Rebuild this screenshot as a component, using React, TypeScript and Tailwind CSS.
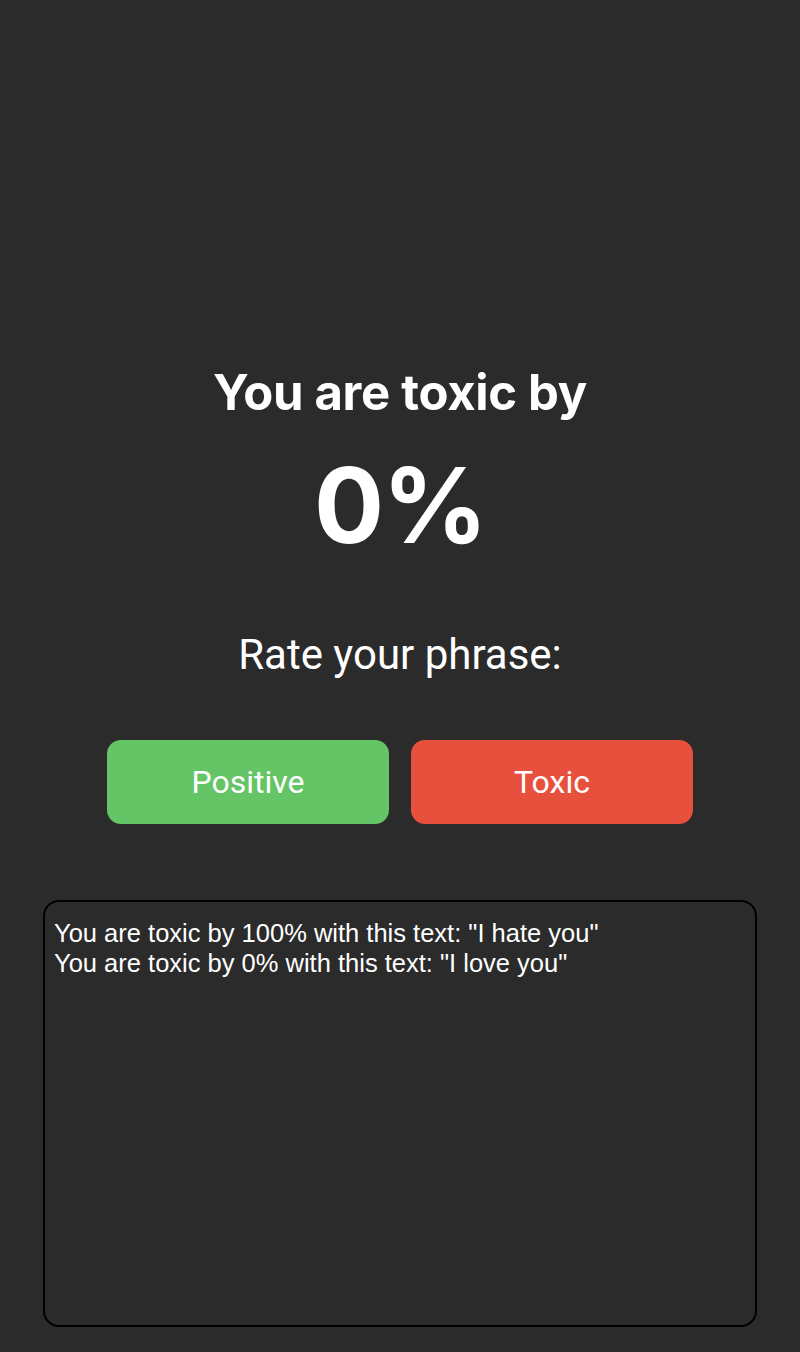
const history = `You are toxic by 100% with this text: "I hate you"
You are toxic by 0% with this text: "I love you"`;

const App = () => {
  return (
    <div className="min-h-[1352px] w-full bg-[#2b2b2b] flex flex-col items-center text-white">
      {/* Score */}
      <h1 className="mt-[364px] text-[49px] leading-[58px] font-bold tracking-[-0.3px] font-['Inter',sans-serif]">
        You are toxic by
      </h1>
      <div className="mt-[28px] text-[104px] leading-[110px] font-bold tracking-[-2px] font-['Inter',sans-serif]">
        0%
      </div>

      {/* Rating */}
      <p className="mt-[70px] text-[42px] leading-[50px] font-['Roboto',sans-serif]">
        Rate your phrase:
      </p>
      <div className="mt-[60px] flex gap-[22px]">
        <button className="w-[282px] h-[84px] rounded-[14px] bg-[#64c466] text-[32px] font-['Roboto',sans-serif] text-white">
          Positive
        </button>
        <button className="w-[282px] h-[84px] rounded-[14px] bg-[#e8503e] text-[32px] font-['Roboto',sans-serif] text-white">
          Toxic
        </button>
      </div>

      {/* History */}
      <textarea
        readOnly
        defaultValue={history}
        className="mt-[76px] w-[714px] h-[427px] resize-none rounded-[16px] border-2 border-black bg-[#2b2b2b] px-[9px] pt-[16px] text-[25.5px] leading-[30px] text-white font-['Liberation_Sans',Arial,sans-serif] outline-none"
      />
    </div>
  );
};

export default App;
